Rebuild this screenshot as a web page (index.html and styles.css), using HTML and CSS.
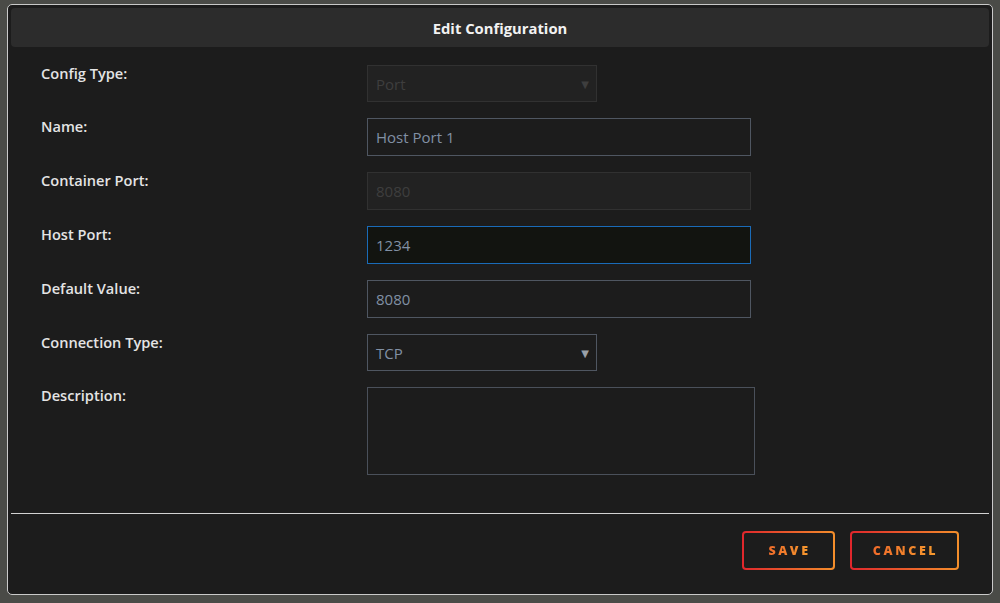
FILE: index.html
```html
<!DOCTYPE html>
<html>
<head>
<meta charset="utf-8">
<link rel="stylesheet" href="styles.css">
</head>
<body>
<div class="dialog">
  <div class="header">Edit Configuration</div>
  <div class="form">
    <div class="row">
      <div class="label">Config Type:</div>
      <div class="field select disabled sel-w">Port<span class="arrow">&#9660;</span></div>
    </div>
    <div class="row">
      <div class="label">Name:</div>
      <div class="field input">Host Port 1</div>
    </div>
    <div class="row">
      <div class="label">Container Port:</div>
      <div class="field input disabled">8080</div>
    </div>
    <div class="row">
      <div class="label">Host Port:</div>
      <div class="field input focus">1234</div>
    </div>
    <div class="row">
      <div class="label">Default Value:</div>
      <div class="field input">8080</div>
    </div>
    <div class="row">
      <div class="label">Connection Type:</div>
      <div class="field select sel-w">TCP<span class="arrow">&#9660;</span></div>
    </div>
    <div class="row">
      <div class="label">Description:</div>
      <div class="field textarea"></div>
    </div>
  </div>
  <div class="sep"></div>
  <div class="footer">
    <button class="btn save"><span>SAVE</span></button>
    <button class="btn cancel"><span>CANCEL</span></button>
  </div>
</div>
</body>
</html>
```
FILE: styles.css
```css
html, body {
  margin: 0;
  padding: 0;
  background: #4a4b47;
  font-family: "Open Sans", "Noto Sans", "DejaVu Sans", sans-serif;
}
body {
  width: 1000px;
  height: 603px;
  overflow: hidden;
}
.dialog {
  margin: 4px 0 0 7px;
  width: 986px;
  height: 591px;
  box-sizing: border-box;
  border: 1px solid #c9c9c9;
  border-radius: 5px;
  background: #1c1c1c;
  padding: 3px;
  display: flex;
  flex-direction: column;
}
.header {
  height: 39px;
  flex: 0 0 39px;
  background: #2c2c2c;
  border-radius: 4px;
  display: flex;
  align-items: center;
  justify-content: center;
  color: #f2f2f2;
  font-weight: 700;
  font-size: 14.8px;
}
.form {
  flex: 1;
  padding: 18px 0 0 30px;
}
.row {
  display: flex;
  align-items: flex-start;
  margin-bottom: 16px;
}
.label {
  width: 326px;
  flex: 0 0 326px;
  color: #e4e4e4;
  font-size: 14.6px;
  font-weight: 600;
  line-height: 18px;
  margin-top: -1px;
}
.field {
  box-sizing: border-box;
  height: 38px;
  width: 384px;
  border: 1px solid #4f5661;
  background: #1c1c1c;
  color: #8190a4;
  font-size: 15px;
  padding-left: 8px;
  display: flex;
  align-items: center;
  position: relative;
}
.sel-w {
  width: 230px;
  height: 37px;
}
.field.disabled {
  background: #222222;
  border-color: #313131;
  color: #3e3e3e;
}
.field.focus {
  border-color: #1a6bb8;
  background: #121410;
}
.arrow {
  position: absolute;
  right: 7px;
  top: 50%;
  transform: translateY(-50%);
  font-size: 10px;
  color: #9aa0a8;
}
.disabled .arrow {
  color: #3e3e3e;
}
.textarea {
  width: 388px;
  height: 88px;
  border-color: #4a505a;
}
.sep {
  height: 1px;
  flex: 0 0 1px;
  background: #d2d2d2;
}
.footer {
  flex: 0 0 77px;
  height: 77px;
  box-sizing: border-box;
  padding: 17px 30px 0 0;
  display: flex;
  justify-content: flex-end;
  align-items: flex-start;
  gap: 15px;
}
.btn {
  height: 39px;
  box-sizing: border-box;
  border: 2px solid transparent;
  border-radius: 4px;
  background: linear-gradient(#1c1c1c, #1c1c1c) padding-box,
              linear-gradient(90deg, #e0262c, #f48f2b) border-box;
  font-family: "Open Sans", "Noto Sans", sans-serif;
  font-weight: 800;
  font-size: 12.5px;
  letter-spacing: 2.6px;
  padding: 0;
  cursor: pointer;
}
.btn span {
  background: linear-gradient(90deg, #f06a2a, #f59a2e);
  -webkit-background-clip: text;
  background-clip: text;
  color: transparent;
  padding-left: 2px;
}
.save { width: 93px; }
.cancel { width: 109px; }
```
